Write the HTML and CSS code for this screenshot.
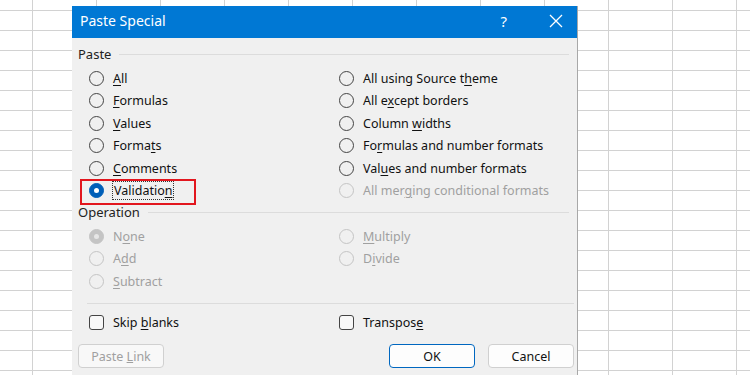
FILE: index.html
```html
<!DOCTYPE html>
<html lang="en">
<head>
    <meta charset="UTF-8">
    <title>Paste Special</title>
    <link rel="stylesheet" href="styles.css">
</head>
<body>

    <div class="sheet">
        <div class="dialog">
            <div class="titlebar">
                <span class="title">Paste Special</span>
                <span class="help">?</span>
                <svg class="close" width="14" height="14" viewBox="0 0 14 14">
                    <path d="M1 1 L13 13 M13 1 L1 13" stroke="#fff" stroke-width="1.3" fill="none"/>
                </svg>
            </div>

            <div class="content">
                <div class="group-label"><span>Paste</span></div>
                <div class="options paste">
                    <div class="opt"><span class="radio"></span><span><u>A</u>ll</span></div>
                    <div class="opt"><span class="radio"></span><span>All using Source t<u>h</u>eme</span></div>
                    <div class="opt"><span class="radio"></span><span><u>F</u>ormulas</span></div>
                    <div class="opt"><span class="radio"></span><span>All e<u>x</u>cept borders</span></div>
                    <div class="opt"><span class="radio"></span><span><u>V</u>alues</span></div>
                    <div class="opt"><span class="radio"></span><span>Column <u>w</u>idths</span></div>
                    <div class="opt"><span class="radio"></span><span>Forma<u>t</u>s</span></div>
                    <div class="opt"><span class="radio"></span><span>Fo<u>r</u>mulas and number formats</span></div>
                    <div class="opt"><span class="radio"></span><span><u>C</u>omments</span></div>
                    <div class="opt"><span class="radio"></span><span>Val<u>u</u>es and number formats</span></div>
                    <div class="opt"><span class="radio checked"></span><span class="focus">Validatio<u>n</u></span></div>
                    <div class="opt disabled"><span class="radio"></span><span>All mer<u>g</u>ing conditional formats</span></div>
                </div>

                <div class="group-label operation"><span>Operation</span></div>
                <div class="options">
                    <div class="opt disabled"><span class="radio checked"></span><span>N<u>o</u>ne</span></div>
                    <div class="opt disabled"><span class="radio"></span><span><u>M</u>ultiply</span></div>
                    <div class="opt disabled"><span class="radio"></span><span>A<u>d</u>d</span></div>
                    <div class="opt disabled"><span class="radio"></span><span>D<u>i</u>vide</span></div>
                    <div class="opt disabled"><span class="radio"></span><span><u>S</u>ubtract</span></div>
                    <div class="opt"></div>
                </div>

                <div class="sep"></div>

                <div class="options checks">
                    <div class="opt"><span class="check"></span><span>Skip <u>b</u>lanks</span></div>
                    <div class="opt"><span class="check"></span><span>Transpos<u>e</u></span></div>
                </div>

                <div class="buttons">
                    <button class="btn" disabled>Paste <u>L</u>ink</button>
                    <button class="btn default">OK</button>
                    <button class="btn">Cancel</button>
                </div>
            </div>

            <div class="highlight"></div>
        </div>
    </div>

</body>
</html>
```

FILE: styles.css
```css
body {
    margin: 0;
    font-family: "Noto Sans", "Open Sans", sans-serif;
    overflow: hidden;
}
.sheet {
    position: relative;
    width: 750px;
    height: 375px;
    background-color: #fff;
    background-image:
        linear-gradient(to right, #d2d2d2 1px, transparent 1px),
        linear-gradient(to bottom, #d2d2d2 1px, transparent 1px);
    background-size: 64px 100%, 100% 20px;
    background-position: 32px 0, 0 10px;
}
.dialog {
    position: absolute;
    left: 72px;
    top: 6px;
    width: 505px;
    height: 380px;
    background: #f0f0f0;
    border-right: 1px solid #a8a8a8;
}
.titlebar {
    height: 32px;
    box-sizing: border-box;
    padding: 0 0 3px 8px;
    background: #0078d4;
    color: #fff;
    display: flex;
    align-items: center;
}
.title {
    font-size: 14px;
    flex: 1;
}
.help {
    font-size: 15px;
    margin-right: 42px;
}
.close {
    margin-right: 14px;
}
.content {
    position: relative;
    padding: 7px 3px 0 6px;
    font-size: 12.5px;
    color: #111;
}
.group-label {
    display: flex;
    align-items: center;
    height: 18px;
    color: #222;
    font-size: 13px;
}
.group-label::after {
    content: "";
    flex: 1;
    height: 1px;
    background: #dcdcdc;
    margin-left: 8px;
    margin-right: 5px;
}
.group-label.operation {
    margin-top: 1px;
}
.options {
    display: grid;
    grid-template-columns: 250px 1fr;
    grid-auto-rows: 22.5px;
    padding-left: 11px;
    margin-top: 4px;
}
.opt {
    display: flex;
    align-items: center;
    white-space: nowrap;
}
.opt u {
    text-underline-offset: 2px;
}
.radio {
    width: 13px;
    height: 13px;
    border: 1px solid #444;
    border-radius: 50%;
    margin-right: 9px;
    box-sizing: content-box;
    position: relative;
    flex: none;
}
.radio.checked {
    background: #005fb8;
    border-color: #005fb8;
}
.radio.checked::after {
    content: "";
    position: absolute;
    left: 4px;
    top: 4px;
    width: 5px;
    height: 5px;
    border-radius: 50%;
    background: #fff;
}
.disabled {
    color: #a0a0a0;
}
.disabled .radio {
    border-color: #c4c4c4;
}
.disabled .radio.checked {
    background: #c4c4c4;
    border-color: #c4c4c4;
}
.disabled .radio.checked::after {
    background: #e6e6e6;
}
.focus {
    outline: 1px dotted #333;
    outline-offset: 0;
    padding: 0 1px;
}
.sep {
    height: 1px;
    background: #dcdcdc;
    margin: 10px 0 0 9px;
}
.checks {
    margin-top: 8px;
}
.check {
    width: 13px;
    height: 13px;
    border: 1px solid #444;
    border-radius: 3px;
    margin-right: 9px;
    background: #f8f8f8;
    flex: none;
}
.buttons {
    display: flex;
    margin-top: 10px;
}
.btn {
    width: 86px;
    height: 24px;
    font-family: inherit;
    font-size: 12.5px;
    color: #111;
    background: #fdfdfd;
    border: 1px solid #d0d0d0;
    border-radius: 4px;
    padding: 0;
}
.btn:disabled {
    color: #a0a0a0;
    background: #f8f8f8;
}
.btn.default {
    margin-left: auto;
    margin-right: 13px;
    border-color: #0067c0;
}
.highlight {
    position: absolute;
    left: 8px;
    top: 173px;
    width: 112px;
    height: 22px;
    border: 2.5px solid #e2161e;
}
```
